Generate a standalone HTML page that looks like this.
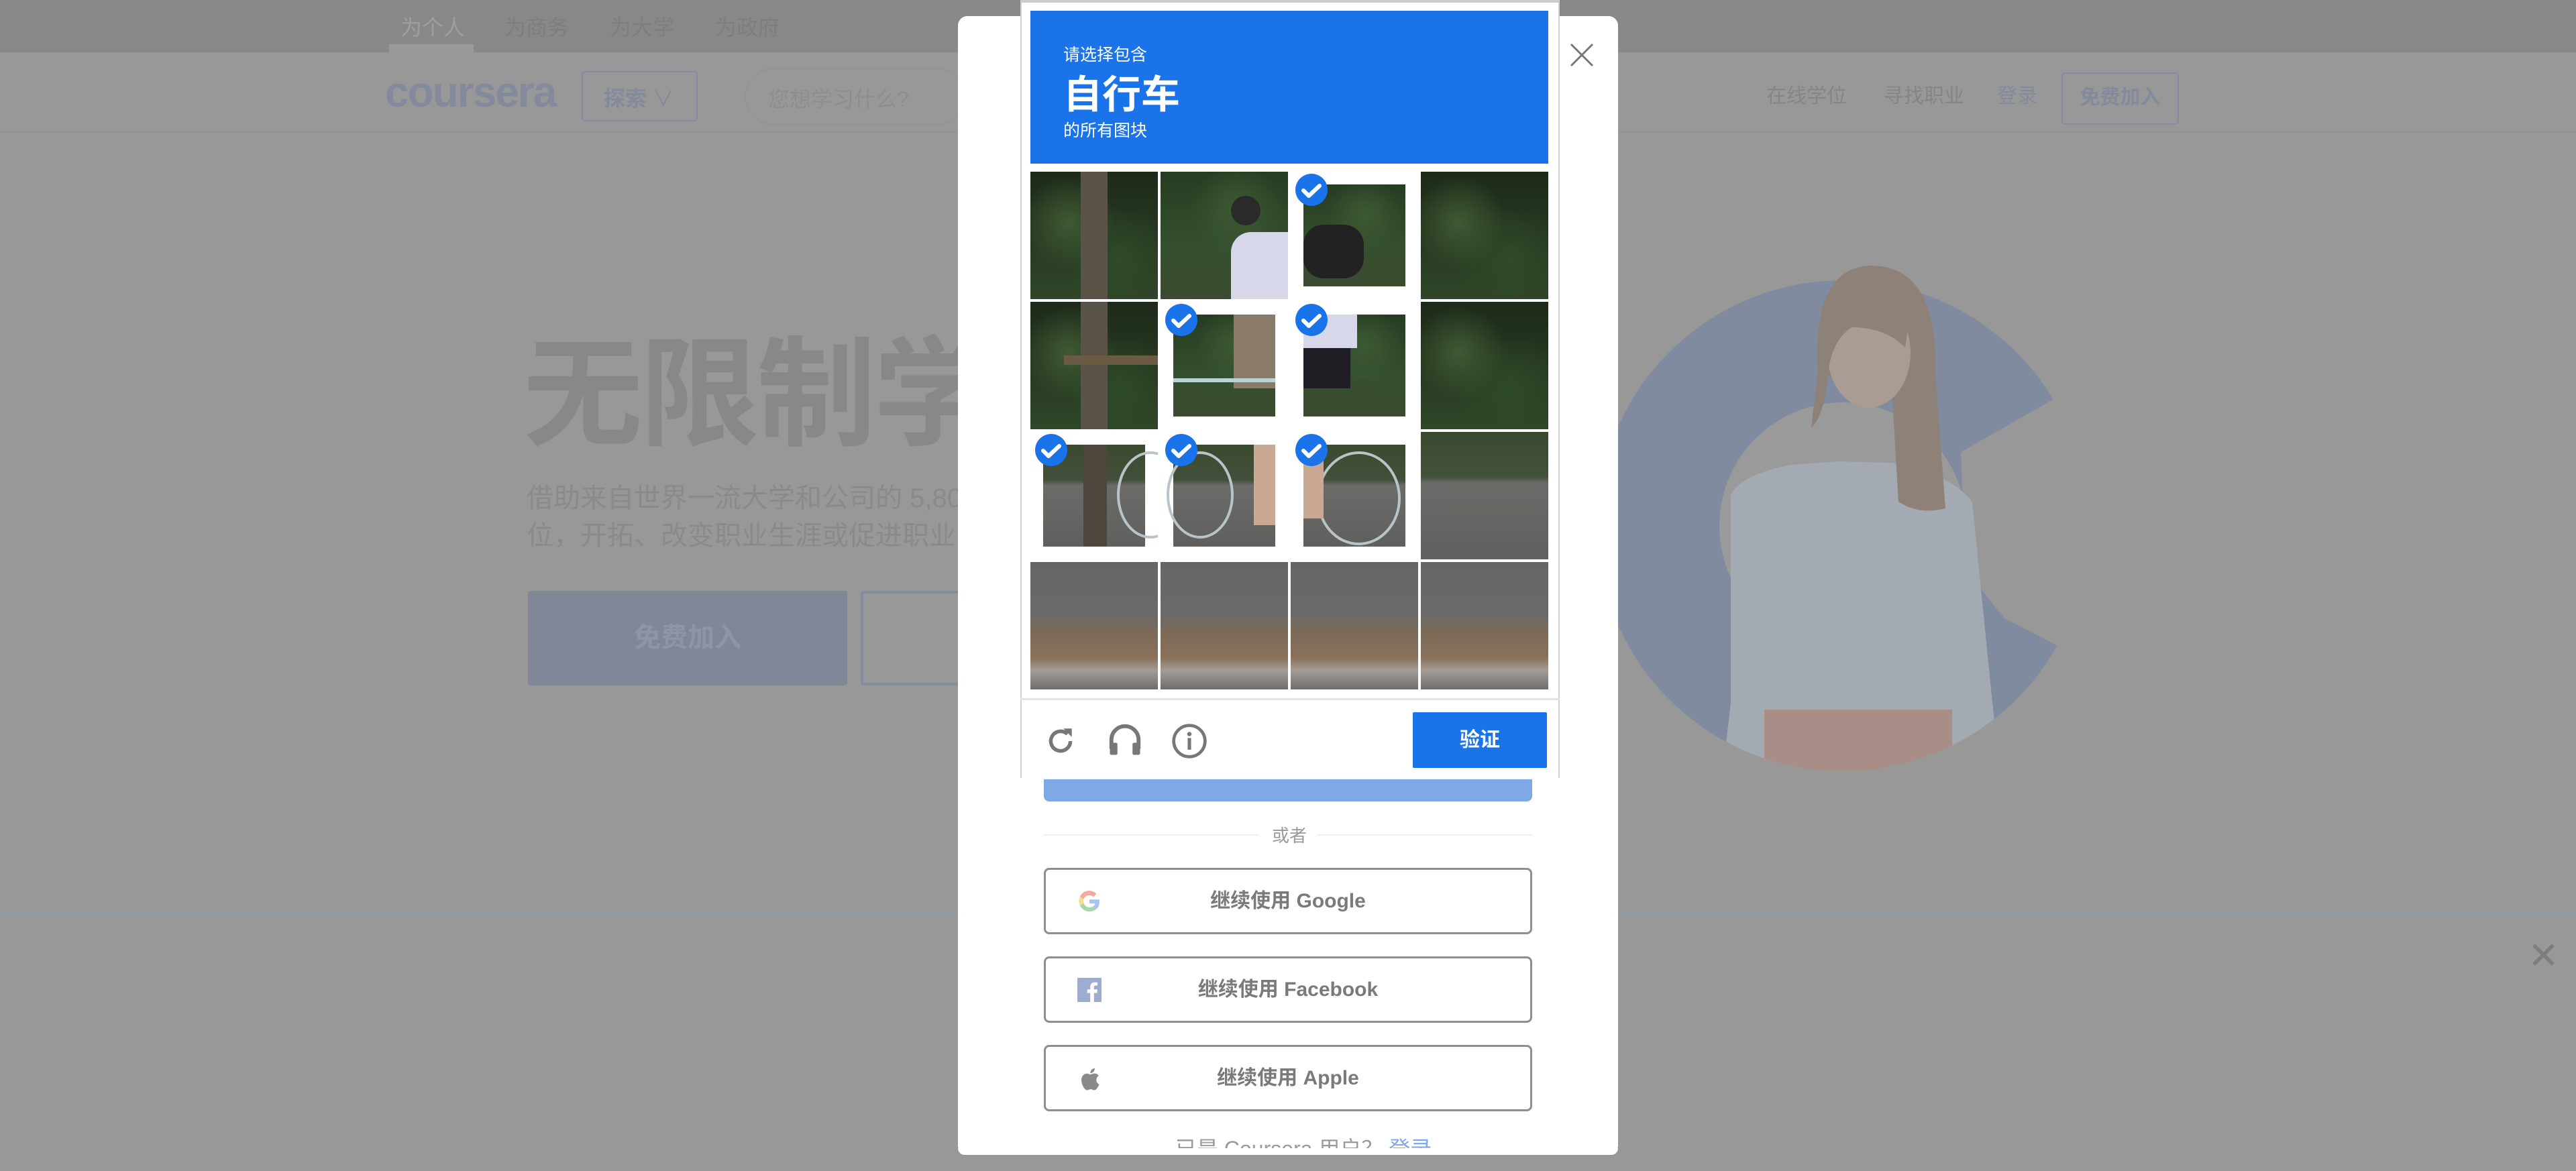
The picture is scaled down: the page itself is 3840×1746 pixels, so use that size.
<!DOCTYPE html>
<html><head><meta charset="utf-8">
<style>
*{margin:0;padding:0;box-sizing:border-box}
body{width:3840px;height:1746px;overflow:hidden;background:#989898;position:relative;font-family:"Liberation Sans","Noto Sans CJK SC",sans-serif}
.a{position:absolute}
.t{white-space:nowrap}
.cell{position:absolute;width:190px;height:190px;overflow:hidden}
.g1{background:radial-gradient(circle at 30% 40%,#3f5a33 0,transparent 40%),radial-gradient(circle at 70% 70%,#2e4a28 0,transparent 45%),linear-gradient(#1d2a18,#2f4628)}
.g2{background:radial-gradient(circle at 60% 30%,#3d5a32 0,transparent 40%),linear-gradient(#263c22,#35502d 60%,#3b4a30)}
.rd{background:linear-gradient(#3a4a2e 0,#43503a 35%,#6b6b68 40%,#5f5f5d 100%)}
.dirt{background:linear-gradient(#666 0,#6a6a68 40%,#7b6a58 55%,#8a715a 75%,#a39c95 85%,#6d6d6d 100%)}
.sel{background:#fff}
.sel .img{position:absolute;left:19px;top:19px;width:152px;height:152px}
.chk{position:absolute;left:7px;top:3px;width:48px;height:48px;border-radius:50%;background:#1a73e8}
.btn{position:absolute;left:1556px;width:728px;height:99px;border:3px solid #8e8e8e;border-radius:8px;background:#fff;font-weight:bold;font-size:30px;color:#7a7a7a;text-align:center;line-height:93px}
</style></head><body>
<!-- top bar -->
<div class="a" style="left:0;top:0;width:3840px;height:78px;background:#888"></div>
<div class="a t" style="left:597px;top:16px;font-size:32px;color:#9e9e9e">为个人</div>
<div class="a" style="left:580px;top:66px;width:126px;height:12px;background:#9a9a9a"></div>
<div class="a t" style="left:752px;top:16px;font-size:32px;color:#7e7e7e">为商务</div>
<div class="a t" style="left:909px;top:16px;font-size:32px;color:#7e7e7e">为大学</div>
<div class="a t" style="left:1066px;top:16px;font-size:32px;color:#7e7e7e">为政府</div>
<!-- header -->
<div class="a t" style="left:574px;top:100px;font-size:64px;font-weight:bold;color:#828a9c;letter-spacing:-2px">coursera</div>
<div class="a" style="left:867px;top:106px;width:173px;height:75px;border:2px solid #858ca0;border-radius:5px"></div>
<div class="a t" style="left:900px;top:122px;font-size:32px;font-weight:bold;color:#828a9c">探索 <span style="font-weight:normal">∨</span></div>
<div class="a" style="left:1110px;top:101px;width:330px;height:86px;border:2px solid #949494;border-radius:43px;border-right:none"></div>
<div class="a t" style="left:1145px;top:123px;font-size:32px;color:#8e8e8e">您想学习什么?</div>
<div class="a t" style="left:2633px;top:118px;font-size:30px;color:#858585">在线学位</div>
<div class="a t" style="left:2808px;top:118px;font-size:30px;color:#858585">寻找职业</div>
<div class="a t" style="left:2977px;top:118px;font-size:30px;color:#828a9c">登录</div>
<div class="a" style="left:3073px;top:108px;width:175px;height:78px;border:2px solid #858ca0;border-radius:5px;font-size:30px;font-weight:bold;color:#828a9c;text-align:center;line-height:72px">免费加入</div>
<div class="a" style="left:0;top:196px;width:3840px;height:2px;background:#939393"></div>
<!-- hero -->
<div class="a t" style="left:780px;top:445px;font-size:178px;font-weight:bold;color:#888;letter-spacing:-4px">无限制学</div>
<div class="a t" style="left:785px;top:715px;font-size:40px;color:#8a8a8a;line-height:56px">借助来自世界一流大学和公司的 5,800<br>位，开拓、改变职业生涯或促进职业</div>
<div class="a" style="left:787px;top:881px;width:476px;height:141px;background:#808898;border-radius:4px;color:#8e95a6;font-size:40px;font-weight:bold;text-align:center;line-height:141px">免费加入</div>
<div class="a" style="left:1283px;top:881px;width:200px;height:141px;border:4px solid #858ca0;border-radius:4px"></div>
<!-- illustration -->
<svg class="a" style="left:2380px;top:380px" width="760" height="800" viewBox="0 0 760 800">
<defs><clipPath id="bot"><rect x="0" y="-100" width="760" height="404"/><circle cx="367" cy="404" r="366"/></clipPath></defs>
<circle cx="367" cy="404" r="366" fill="#808b9f"/>
<circle cx="367" cy="404" r="184" fill="#9a9a9a"/>
<polygon points="543,294 760,170 760,620 608,542 550,470" fill="#989898"/>
<g clip-path="url(#bot)">
<g transform="translate(0,28)">
<path d="M200 330 Q215 300 290 285 L360 280 L440 282 Q530 300 560 340 L590 640 L605 770 L185 770 L200 640 Z" fill="#a4aab1"/>
<rect x="250" y="650" width="280" height="120" fill="#a88e86"/>
<path d="M330 150 Q320 -10 410 -12 Q510 -10 505 150 L520 350 Q480 360 450 340 L440 170 Z" fill="#8d8178"/>
<ellipse cx="406" cy="118" rx="62" ry="82" fill="#a89c95"/>
<path d="M460 110 Q480 -5 410 -10 Q345 -5 335 100 L320 230 Q340 210 345 150 Q350 100 380 80 Q430 80 460 110Z" fill="#8d8178"/>
</g>
</g>
</svg>
<div class="a" style="left:0;top:1358px;width:3840px;height:8px;background:#8e9aa6"></div>
<div class="a t" style="left:3768px;top:1392px;font-size:56px;color:#7e7e7e">✕</div>
<!-- modal -->
<div class="a" style="left:1428px;top:24px;width:984px;height:1698px;background:#fff;border-radius:14px"></div>
<svg class="a" style="left:2340px;top:64px" width="36" height="36"><path d="M2 2L34 34M34 2L2 34" stroke="#777" stroke-width="3"/></svg>
<div class="a" style="left:1556px;top:1162px;width:728px;height:33px;background:#7fa8e6;border-radius:0 0 8px 8px"></div>
<div class="a" style="left:1556px;top:1244px;width:320px;height:2px;background:#eee"></div>
<div class="a" style="left:1964px;top:1244px;width:320px;height:2px;background:#eee"></div>
<div class="a t" style="left:1896px;top:1226px;font-size:26px;color:#999">或者</div>
<div class="btn" style="top:1294px">继续使用 Google</div>
<svg class="a" style="left:1606px;top:1326px" width="36" height="36" viewBox="0 0 24 24"><path d="M22 12.2c0-.7-.1-1.4-.2-2H12v3.9h5.6a4.8 4.8 0 0 1-2.1 3.1v2.6h3.4c2-1.8 3.1-4.5 3.1-7.6z" fill="#a9c2f0"/><path d="M12 22c2.8 0 5.2-.9 6.9-2.5l-3.4-2.6c-.9.6-2.1 1-3.5 1-2.7 0-5-1.8-5.8-4.3H2.7v2.7A10 10 0 0 0 12 22z" fill="#a5d6b0"/><path d="M6.2 13.6a6 6 0 0 1 0-3.8V7.1H2.7a10 10 0 0 0 0 9.2z" fill="#f7df8e"/><path d="M12 6c1.5 0 2.9.5 4 1.5l3-3A10 10 0 0 0 2.7 7.1l3.5 2.7C7 7.6 9.3 6 12 6z" fill="#f3a9a2"/></svg>
<div class="btn" style="top:1426px">继续使用 Facebook</div>
<svg class="a" style="left:1606px;top:1458px" width="36" height="36" viewBox="0 0 24 24"><rect width="24" height="24" rx="1" fill="#9eaccf"/><path d="M16.5 24v-9h3l.5-3.5h-3.5V9.3c0-1 .3-1.7 1.8-1.7H20V4.5c-.3 0-1.4-.1-2.7-.1-2.7 0-4.5 1.6-4.5 4.6v2.5h-3V15h3v9z" fill="#fff"/></svg>
<div class="btn" style="top:1558px">继续使用 Apple</div>
<svg class="a" style="left:1607px;top:1590px" width="34" height="38" viewBox="0 0 24 28"><path d="M19.6 14.8c0-3 2.5-4.5 2.6-4.6-1.4-2.1-3.6-2.4-4.4-2.4-1.9-.2-3.6 1.1-4.6 1.1-.9 0-2.4-1.1-4-1-2 0-3.9 1.2-5 3-2.1 3.7-.5 9.2 1.5 12.2 1 1.5 2.2 3.1 3.8 3 1.5-.1 2.1-1 3.9-1s2.3 1 3.9 1c1.6 0 2.7-1.5 3.7-3 1.2-1.7 1.6-3.3 1.7-3.4-.1 0-3.1-1.2-3.1-4.9zM16.6 5.8c.8-1 1.4-2.4 1.2-3.8-1.2.1-2.7.8-3.5 1.8-.8.9-1.5 2.3-1.3 3.7 1.3.1 2.7-.7 3.6-1.7z" fill="#8a8a8a"/></svg>
<div class="a t" style="left:1752px;top:1688px;font-size:32px;color:#9a9a9a">已是 Coursera 用户？ <span style="color:#7fa8e6">登录</span></div>
<div class="a" style="left:0;top:1722px;width:3840px;height:24px;background:#989898"></div>
<div class="a" style="left:1428px;top:1712px;width:984px;height:10px;background:#fff;border-radius:0 0 14px 14px"></div>
<!-- recaptcha -->
<div class="a" style="left:1521px;top:0;width:804px;height:1160px;background:#fff;border:2px solid #d0d0d0;border-bottom:none;border-top:4px solid #ccc"></div>
<div class="a" style="left:1536px;top:16px;width:772px;height:228px;background:#1a73e8"></div>
<div class="a t" style="left:1585px;top:62px;font-size:25px;color:#fff">请选择包含</div>
<div class="a t" style="left:1585px;top:94px;font-size:58px;font-weight:bold;color:#fff">自行车</div>
<div class="a t" style="left:1585px;top:175px;font-size:25px;color:#fff">的所有图块</div>
<!-- grid -->
<div class="cell g1" style="left:1536px;top:256px"><div class="a" style="left:75px;top:0;width:40px;height:190px;background:#5a5448"></div></div>
<div class="cell g2" style="left:1730px;top:256px"><div class="a" style="left:105px;top:90px;width:85px;height:100px;background:#d6d8ea;border-radius:30px 0 0 0"></div><div class="a" style="left:105px;top:36px;width:44px;height:44px;border-radius:50%;background:#2a2a2a"></div></div>
<div class="cell sel" style="left:1924px;top:256px"><div class="img g2"><div class="a" style="left:0;top:60px;width:90px;height:80px;background:#222;border-radius:30px"></div></div><div class="chk"></div></div>
<div class="cell g1" style="left:2118px;top:256px"></div>
<div class="cell g1" style="left:1536px;top:450px"><div class="a" style="left:75px;top:0;width:40px;height:190px;background:#5a5448"></div><div class="a" style="left:50px;top:80px;width:140px;height:14px;background:#6b5a44"></div></div>
<div class="cell sel" style="left:1730px;top:450px"><div class="img g2"><div class="a" style="left:90px;top:0;width:62px;height:110px;background:#8a7a6a"></div><div class="a" style="left:0;top:95px;width:152px;height:6px;background:#b9d2d8"></div></div><div class="chk"></div></div>
<div class="cell sel" style="left:1924px;top:450px"><div class="img g2"><div class="a" style="left:0;top:0;width:80px;height:50px;background:#d6d8ea"></div><div class="a" style="left:0;top:50px;width:70px;height:60px;background:#1e1e24"></div></div><div class="chk"></div></div>
<div class="cell g1" style="left:2118px;top:450px"></div>
<div class="cell sel" style="left:1536px;top:644px"><div class="img rd"><div class="a" style="left:60px;top:0;width:35px;height:152px;background:#4c463c"></div><div class="a" style="left:110px;top:10px;width:100px;height:130px;border:4px solid #b8c4c8;border-radius:50%"></div></div><div class="chk"></div></div>
<div class="cell sel" style="left:1730px;top:644px"><div class="img rd"><div class="a" style="left:-10px;top:10px;width:100px;height:130px;border:4px solid #b8c4c8;border-radius:50%"></div><div class="a" style="left:120px;top:0;width:32px;height:120px;background:#c9a894"></div></div><div class="chk"></div></div>
<div class="cell sel" style="left:1924px;top:644px"><div class="img rd"><div class="a" style="left:20px;top:10px;width:125px;height:140px;border:4px solid #b8c4c8;border-radius:50%"></div><div class="a" style="left:0;top:0;width:30px;height:110px;background:#c9a894"></div></div><div class="chk"></div></div>
<div class="cell rd" style="left:2118px;top:644px"></div>
<div class="cell dirt" style="left:1536px;top:838px"></div>
<div class="cell dirt" style="left:1730px;top:838px"></div>
<div class="cell dirt" style="left:1924px;top:838px"></div>
<div class="cell dirt" style="left:2118px;top:838px"></div>
<svg class="a" style="left:0;top:0" width="3840" height="900"><g fill="none" stroke="#fff" stroke-width="6" stroke-linecap="round" stroke-linejoin="round"><path d="M1943 284l8 8 16-15"/><path d="M1749 478l8 8 16-15"/><path d="M1943 478l8 8 16-15"/><path d="M1555 672l8 8 16-15"/><path d="M1749 672l8 8 16-15"/><path d="M1943 672l8 8 16-15"/></g></svg>
<div class="a" style="left:1521px;top:1041px;width:804px;height:3px;background:#e2e2e2"></div>
<!-- bottom icons -->
<svg class="a" style="left:1556px;top:1080px" width="50" height="50" viewBox="0 0 24 24"><path d="M19 12a7 7 0 1 1-2.1-5" fill="none" stroke="#777" stroke-width="2.6"/><path d="M14 3l6 0 0 6z" fill="#777"/></svg>
<svg class="a" style="left:1650px;top:1075px" width="54" height="56" viewBox="0 0 24 24"><path d="M3 18v-6a9 9 0 0 1 18 0v6" fill="none" stroke="#777" stroke-width="2.6"/><rect x="2" y="14" width="5" height="8" rx="1" fill="#777"/><rect x="17" y="14" width="5" height="8" rx="1" fill="#777"/></svg>
<svg class="a" style="left:1745px;top:1077px" width="56" height="56" viewBox="0 0 24 24"><circle cx="12" cy="12" r="10" fill="none" stroke="#777" stroke-width="2"/><circle cx="12" cy="7.5" r="1.4" fill="#777"/><rect x="10.9" y="10" width="2.2" height="7.5" fill="#777"/></svg>
<div class="a" style="left:2106px;top:1062px;width:200px;height:83px;background:#1a73e8;border-radius:2px;color:#fff;font-size:30px;font-weight:bold;text-align:center;line-height:83px">验证</div>
</body></html>
